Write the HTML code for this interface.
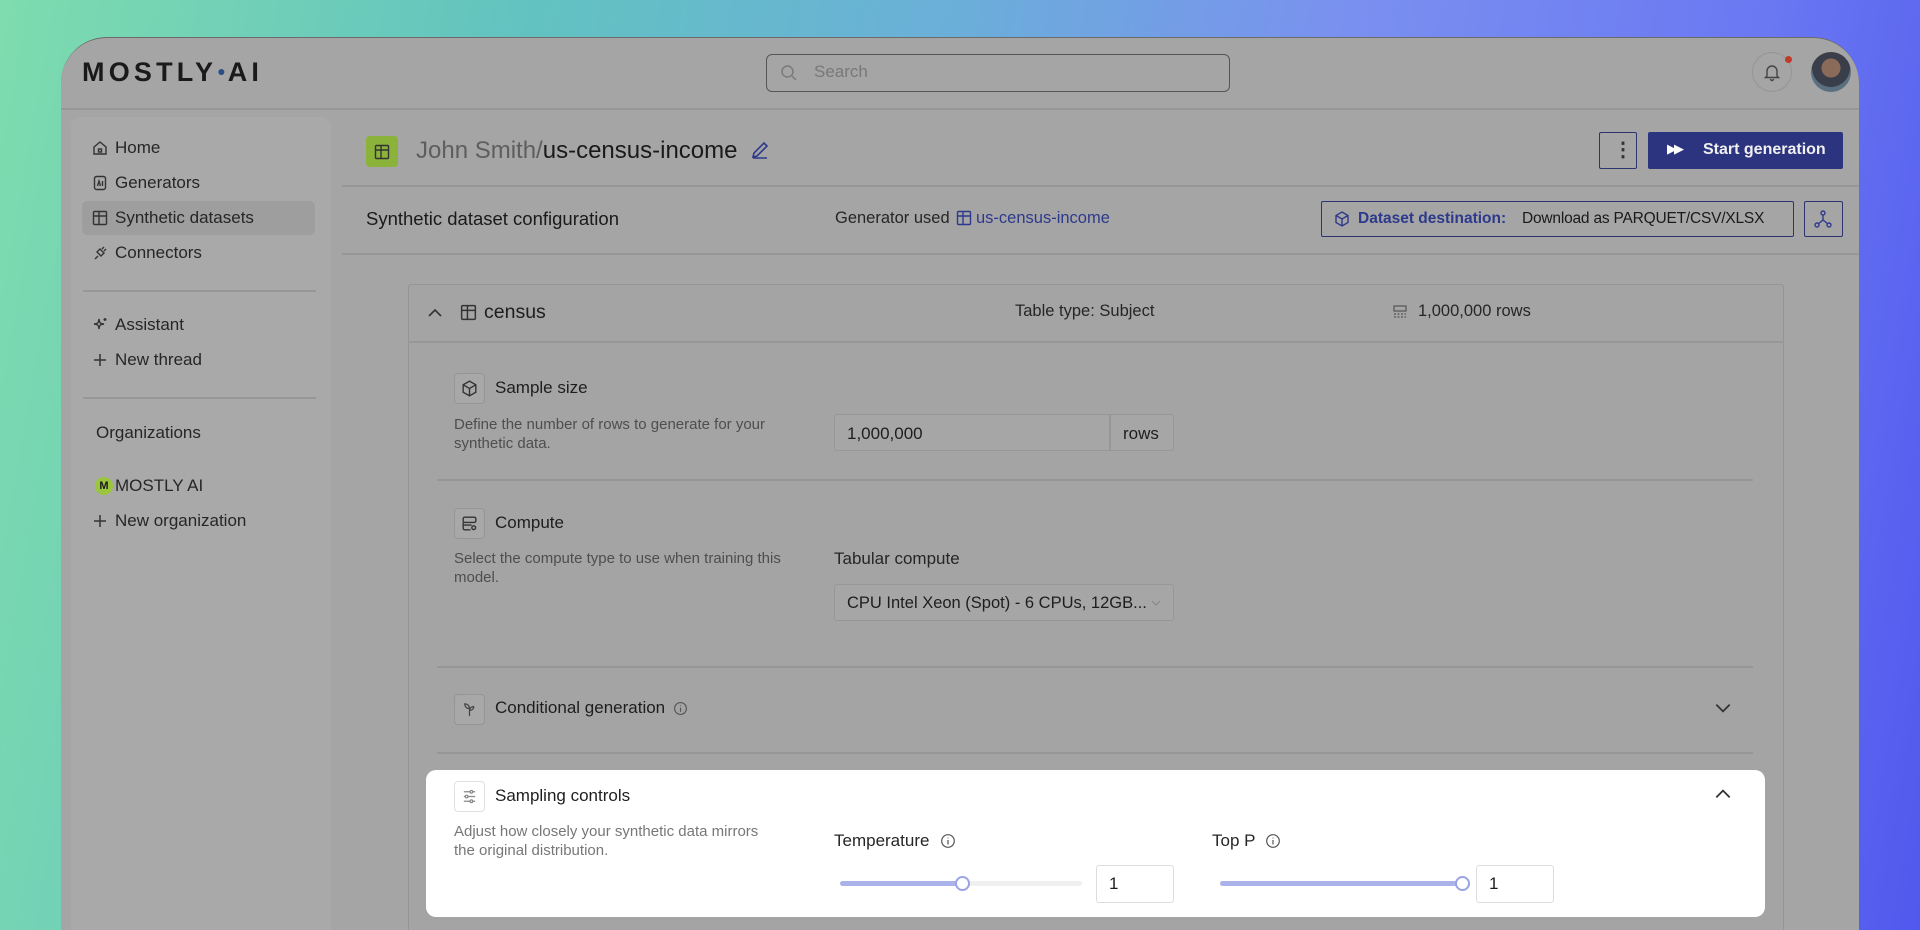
<!DOCTYPE html>
<html style="width:1920px;height:930px;overflow:hidden"><head><meta charset="utf-8"><style>
*{box-sizing:border-box;margin:0;padding:0}
html,body{width:1920px;height:930px;overflow:hidden}
body{position:relative;font-family:"Liberation Sans",sans-serif;color:#1e1e1e;
background:linear-gradient(100deg,#7edcae 0%,#62c3c0 25%,#6ab0d8 45%,#7a90f0 65%,#6a78f2 85%,#5158ee 100%)}
.a{position:absolute}
.win{left:61px;top:37px;width:1798px;height:893px;border-radius:46px 46px 0 0;background:#a5a5a5;overflow:hidden;border-top:1.5px solid #6b6b6b}
.t{position:absolute;white-space:nowrap}
.hl{position:absolute;height:1.5px;background:#979797}
.ib{position:absolute;width:31px;height:31px;border:1.5px solid #959595;border-radius:4px;background:#a8a8a8}
.in{position:absolute;border:1.5px solid #979797;border-radius:3px;background:#a6a6a6}
svg{position:absolute}
</style></head><body>
<div class="a win">
 <div class="t" style="left:21px;top:19px;font-size:27px;font-weight:bold;letter-spacing:4.2px;color:#1a1a1a">MOSTLY<span style="color:#2b4d8a;font-size:14px;vertical-align:5px;letter-spacing:2px">●</span>AI</div>
 <div class="a" style="left:705px;top:16px;width:464px;height:38px;border:1.5px solid #555;border-radius:6px"></div>
 <svg style="left:719px;top:26px" width="18" height="18" viewBox="0 0 18 18" fill="none" stroke="#7a7a7a" stroke-width="1.5"><circle cx="7.5" cy="7.5" r="5.5"/><path d="M12 12l4 4"/></svg>
 <div class="t" style="left:753px;top:24px;font-size:17px;color:#787878">Search</div>
 <div class="a" style="left:1691px;top:14px;width:40px;height:40px;border:1.5px solid #949494;border-radius:50%"></div>
 <svg style="left:1701px;top:24px" width="20" height="20" viewBox="0 0 20 20" fill="none" stroke="#444" stroke-width="1.4"><path d="M5 14V9a5 5 0 0110 0v5l1.5 1.5h-13z"/><path d="M8.5 17a1.5 1.5 0 003 0"/></svg>
 <div class="a" style="left:1724px;top:18px;width:7px;height:7px;border-radius:50%;background:#c0392b"></div>
 <div class="a" style="left:1750px;top:14px;width:40px;height:40px;border-radius:50%;background:radial-gradient(circle at 50% 40%,#8a6a58 0 30%,#3a3e4a 31% 60%,#5a6f80 61%)"></div>
 <div class="hl" style="left:0;top:70px;width:1798px"></div>
 <div class="a" style="left:10px;top:79px;width:260px;height:900px;background:#a9a9a9;border-radius:10px"></div>
 <div class="a" style="left:21px;top:163px;width:233px;height:34px;background:#9e9e9e;border-radius:5px"></div>
 <div style="font-size:17px;color:#262626">
  <div class="t" style="left:54px;top:100px">Home</div>
  <div class="t" style="left:54px;top:135px">Generators</div>
  <div class="t" style="left:54px;top:170px">Synthetic datasets</div>
  <div class="t" style="left:54px;top:205px">Connectors</div>
  <div class="t" style="left:54px;top:277px">Assistant</div>
  <div class="t" style="left:54px;top:312px">New thread</div>
  <div class="t" style="left:35px;top:385px;font-size:17px">Organizations</div>
  <div class="t" style="left:54px;top:438px">MOSTLY AI</div>
  <div class="t" style="left:54px;top:473px">New organization</div>
 </div>
 <svg style="left:30px;top:101px" width="18" height="18" viewBox="0 0 18 18" fill="none" stroke="#333" stroke-width="1.4"><path d="M3 8l6-5 6 5v7H3z"/><rect x="7.5" y="10" width="3" height="3"/></svg>
 <svg style="left:30px;top:136px" width="18" height="18" viewBox="0 0 18 18" fill="none" stroke="#333" stroke-width="1.4"><rect x="3.5" y="2.5" width="11" height="13" rx="2"/><path d="M6.5 12l1.5-5 1.5 5M11.5 7v5"/></svg>
 <svg style="left:30px;top:171px" width="18" height="18" viewBox="0 0 18 18" fill="none" stroke="#333" stroke-width="1.4"><rect x="2.5" y="2.5" width="13" height="13" rx="1"/><path d="M2.5 7h13M8 2.5v13"/></svg>
 <svg style="left:30px;top:206px" width="18" height="18" viewBox="0 0 18 18" fill="none" stroke="#333" stroke-width="1.4"><path d="M4 15l3-3M6 8l4 4 3-3-4-4zM11 5l2-2M13 7l2-2"/></svg>
 <svg style="left:30px;top:278px" width="18" height="18" viewBox="0 0 18 18" fill="none" stroke="#333" stroke-width="1.4"><path d="M8 3c.5 4 1 4.5 5 5-4 .5-4.5 1-5 5-.5-4-1-4.5-5-5 4-.5 4.5-1 5-5zM14 2v3M12.5 3.5h3"/></svg>
 <svg style="left:30px;top:313px" width="18" height="18" viewBox="0 0 18 18" fill="none" stroke="#333" stroke-width="1.5"><path d="M9 3v12M3 9h12"/></svg>
 <div class="a" style="left:34px;top:439px;width:18px;height:18px;border-radius:50%;background:#9bc53d;font-size:11px;font-weight:bold;text-align:center;line-height:18px;color:#1a1a1a">M</div>
 <svg style="left:30px;top:474px" width="18" height="18" viewBox="0 0 18 18" fill="none" stroke="#333" stroke-width="1.5"><path d="M9 3v12M3 9h12"/></svg>
 <div class="hl" style="left:22px;top:252px;width:233px"></div>
 <div class="hl" style="left:22px;top:359px;width:233px"></div>
 <div class="a" style="left:305px;top:98px;width:32px;height:31px;border-radius:4px;background:#8bb33a"></div>
 <svg style="left:312px;top:105px" width="18" height="18" viewBox="0 0 18 18" fill="none" stroke="#333" stroke-width="1.4"><rect x="2.5" y="2.5" width="13" height="13" rx="1"/><path d="M2.5 7h13M8 2.5v13"/></svg>
 <div class="t" style="left:355px;top:99px;font-size:24px;color:#5e5e5e">John Smith/<span style="color:#1a1a1a">us-census-income</span></div>
 <svg style="left:688px;top:101px" width="22" height="22" viewBox="0 0 22 22" fill="none" stroke="#2d3a8c" stroke-width="1.6"><path d="M4 18l1-4 10-10 3 3-10 10zM4 19h14"/></svg>
 <div class="a" style="left:1538px;top:94px;width:38px;height:37px;border:1.5px solid #2c3570;border-radius:2px"></div>
 <div class="t" style="left:1552px;top:99px;font-size:20px;font-weight:bold;color:#333">⋮</div>
 <div class="a" style="left:1587px;top:94px;width:195px;height:37px;background:#2c347f;border-radius:2px"></div>
 <div class="t" style="left:1606px;top:103px;font-size:13px;color:#fff;letter-spacing:-3px">▶▶</div>
 <div class="t" style="left:1642px;top:103px;font-size:16px;font-weight:bold;color:#f0f0f0">Start generation</div>
 <div class="hl" style="left:281px;top:147px;width:1517px"></div>
 <div class="t" style="left:305px;top:170px;font-size:18.5px;color:#1a1a1a">Synthetic dataset configuration</div>
 <div class="t" style="left:774px;top:171px;font-size:16.5px;color:#262626">Generator used</div>
 <svg style="left:894px;top:171px" width="18" height="18" viewBox="0 0 18 18" fill="none" stroke="#2d3a8c" stroke-width="1.4"><rect x="2.5" y="2.5" width="13" height="13" rx="1"/><path d="M2.5 7h13M8 2.5v13"/></svg>
 <div class="t" style="left:915px;top:171px;font-size:16.5px;color:#2d3a8c">us-census-income</div>
 <div class="a" style="left:1260px;top:163px;width:473px;height:36px;border:1.5px solid #2c3570;border-radius:2px"></div>
 <svg style="left:1272px;top:172px" width="18" height="18" viewBox="0 0 18 18" fill="none" stroke="#2d3a8c" stroke-width="1.4"><path d="M9 2l6 3.5v7L9 16l-6-3.5v-7zM3 5.5L9 9l6-3.5M9 9v7"/></svg>
 <div class="t" style="left:1297px;top:172px;font-size:15.5px;font-weight:bold;color:#2d3a8c">Dataset destination:</div>
 <div class="t" style="left:1461px;top:172px;font-size:15.5px;color:#1a1a1a;letter-spacing:-0.2px">Download as PARQUET/CSV/XLSX</div>
 <div class="a" style="left:1743px;top:163px;width:39px;height:36px;border:1.5px solid #2c3570;border-radius:2px"></div>
 <svg style="left:1752px;top:171px" width="20" height="20" viewBox="0 0 20 20" fill="none" stroke="#2d3a8c" stroke-width="1.4"><circle cx="10" cy="4" r="2"/><circle cx="4" cy="16" r="2"/><circle cx="16" cy="16" r="2"/><path d="M10 6v5l-5 4M10 11l5 4"/></svg>
 <div class="hl" style="left:281px;top:215px;width:1517px"></div>
 <div class="a" style="left:347px;top:246px;width:1376px;height:800px;border:1.5px solid #959595;border-radius:3px;background:#a4a4a4"></div>
 <div class="hl" style="left:347px;top:303px;width:1376px"></div>
 <svg style="left:365px;top:266px" width="18" height="18" viewBox="0 0 18 18" fill="none" stroke="#333" stroke-width="1.6"><path d="M3 12l6-6 6 6"/></svg>
 <svg style="left:398px;top:265px" width="19" height="19" viewBox="0 0 18 18" fill="none" stroke="#333" stroke-width="1.4"><rect x="2.5" y="2.5" width="13" height="13" rx="1"/><path d="M2.5 7h13M8 2.5v13"/></svg>
 <div class="t" style="left:423px;top:263px;font-size:19.5px;color:#1e1e1e">census</div>
 <div class="t" style="left:954px;top:264px;font-size:16.5px;color:#262626">Table type: Subject</div>
 <svg style="left:1331px;top:266px" width="16" height="16" viewBox="0 0 16 16" fill="none" stroke="#555" stroke-width="1.2"><rect x="2" y="2" width="12" height="5"/><path d="M2 10h12M2 13h12" stroke-dasharray="2 1.5"/></svg>
 <div class="t" style="left:1357px;top:264px;font-size:16.5px;color:#262626">1,000,000 rows</div>
 <div class="ib" style="left:393px;top:335px"></div>
 <svg style="left:399px;top:341px" width="19" height="19" viewBox="0 0 18 18" fill="none" stroke="#333" stroke-width="1.3"><path d="M9 2l6 3.5v7L9 16l-6-3.5v-7zM3 5.5L9 9l6-3.5M9 9v7"/></svg>
 <div class="t" style="left:434px;top:340px;font-size:17px;color:#1e1e1e">Sample size</div>
 <div class="t" style="left:393px;top:377px;font-size:15px;line-height:19px;color:#4e4e4e">Define the number of rows to generate for your<br>synthetic data.</div>
 <div class="in" style="left:773px;top:376px;width:340px;height:37px"></div>
 <div class="a" style="left:1048px;top:376px;width:1.5px;height:37px;background:#979797"></div>
 <div class="t" style="left:786px;top:386px;font-size:17px;color:#1e1e1e">1,000,000</div>
 <div class="t" style="left:1062px;top:386px;font-size:17px;color:#1e1e1e">rows</div>
 <div class="hl" style="left:376px;top:441px;width:1316px"></div>
 <div class="ib" style="left:393px;top:470px"></div>
 <svg style="left:399px;top:476px" width="19" height="19" viewBox="0 0 18 18" fill="none" stroke="#333" stroke-width="1.3"><rect x="3" y="3" width="12" height="5" rx="1.5"/><path d="M3 8v5.5a1.5 1.5 0 001.5 1.5H10M3 10.5h8"/><circle cx="13" cy="13" r="1.8"/></svg>
 <div class="t" style="left:434px;top:475px;font-size:17px;color:#1e1e1e">Compute</div>
 <div class="t" style="left:393px;top:511px;font-size:15px;line-height:19px;color:#4e4e4e">Select the compute type to use when training this<br>model.</div>
 <div class="t" style="left:773px;top:511px;font-size:17px;color:#262626">Tabular compute</div>
 <div class="in" style="left:773px;top:546px;width:340px;height:37px"></div>
 <div class="t" style="left:786px;top:556px;font-size:16.5px;color:#1e1e1e">CPU Intel Xeon (Spot) - 6 CPUs, 12GB...</div>
 <svg style="left:1088px;top:558px" width="14" height="14" viewBox="0 0 14 14" fill="none" stroke="#888" stroke-width="1.2"><path d="M3 5l4 4 4-4"/></svg>
 <div class="hl" style="left:376px;top:628px;width:1316px"></div>
 <div class="ib" style="left:393px;top:656px"></div>
 <svg style="left:400px;top:663px" width="17" height="17" viewBox="0 0 18 18" fill="none" stroke="#444" stroke-width="1.3"><path d="M9 16V8M9 8c0-3-2-5-5-5 0 3 2 5 5 5zM9 10c0-2.5 2-4 4.5-4 0 2.5-2 4-4.5 4z"/></svg>
 <div class="t" style="left:434px;top:660px;font-size:17px;color:#1e1e1e">Conditional generation</div>
 <svg style="left:612px;top:663px" width="15" height="15" viewBox="0 0 16 16" fill="none" stroke="#555" stroke-width="1.2"><circle cx="8" cy="8" r="6.3"/><path d="M8 7v4.5M8 4.6v.8"/></svg>
 <svg style="left:1652px;top:660px" width="20" height="20" viewBox="0 0 18 18" fill="none" stroke="#333" stroke-width="1.6"><path d="M3 6l6 6 6-6"/></svg>
 <div class="hl" style="left:376px;top:714px;width:1316px"></div>
 <div class="a" style="left:365px;top:732px;width:1339px;height:147px;background:#fff;border-radius:10px"></div>
 <div class="ib" style="left:393px;top:743px;background:#fff;border-color:#e0e0e0"></div>
 <svg style="left:400px;top:750px" width="17" height="17" viewBox="0 0 18 18" fill="none" stroke="#888" stroke-width="1.3"><path d="M3 4h12M3 9h12M3 14h12"/><circle cx="11" cy="4" r="1.4" fill="#fff"/><circle cx="6" cy="9" r="1.4" fill="#fff"/><circle cx="11" cy="14" r="1.4" fill="#fff"/></svg>
 <div class="t" style="left:434px;top:748px;font-size:17px;color:#1e1e1e">Sampling controls</div>
 <svg style="left:1652px;top:746px" width="20" height="20" viewBox="0 0 18 18" fill="none" stroke="#333" stroke-width="1.6"><path d="M3 12l6-6 6 6"/></svg>
 <div class="t" style="left:393px;top:784px;font-size:15px;line-height:19px;color:#777">Adjust how closely your synthetic data mirrors<br>the original distribution.</div>
 <div class="t" style="left:773px;top:793px;font-size:17px;color:#262626">Temperature</div>
 <svg style="left:879px;top:795px" width="16" height="16" viewBox="0 0 16 16" fill="none" stroke="#555" stroke-width="1.2"><circle cx="8" cy="8" r="6.3"/><path d="M8 7v4.5M8 4.6v.8"/></svg>
 <div class="t" style="left:1151px;top:793px;font-size:17px;color:#262626">Top P</div>
 <svg style="left:1204px;top:795px" width="16" height="16" viewBox="0 0 16 16" fill="none" stroke="#555" stroke-width="1.2"><circle cx="8" cy="8" r="6.3"/><path d="M8 7v4.5M8 4.6v.8"/></svg>
 <div class="a" style="left:779px;top:843px;width:242px;height:5px;border-radius:3px;background:#f0f0f0"></div>
 <div class="a" style="left:779px;top:843px;width:122px;height:5px;border-radius:3px;background:#aab2ea"></div>
 <div class="a" style="left:894px;top:838px;width:15px;height:15px;border-radius:50%;background:#fff;border:2px solid #9aa4e4"></div>
 <div class="in" style="left:1035px;top:827px;width:78px;height:38px;background:#fff;border-color:#ddd"></div>
 <div class="t" style="left:1048px;top:836px;font-size:17px;color:#1e1e1e">1</div>
 <div class="a" style="left:1159px;top:843px;width:242px;height:5px;border-radius:3px;background:#aab2ea"></div>
 <div class="a" style="left:1394px;top:838px;width:15px;height:15px;border-radius:50%;background:#fff;border:2px solid #9aa4e4"></div>
 <div class="in" style="left:1415px;top:827px;width:78px;height:38px;background:#fff;border-color:#ddd"></div>
 <div class="t" style="left:1428px;top:836px;font-size:17px;color:#1e1e1e">1</div>
 <div class="hl" style="left:376px;top:893px;width:1316px"></div>
</div>
</body></html>
